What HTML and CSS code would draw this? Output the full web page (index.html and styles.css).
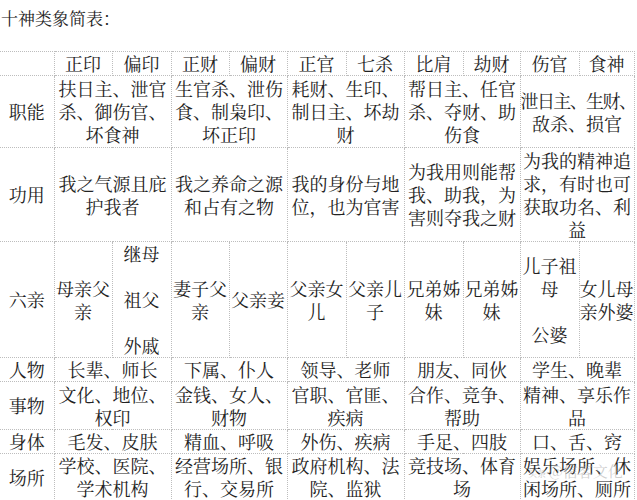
FILE: index.html
```html
<!DOCTYPE html>
<html lang="zh-CN">
<head>
<meta charset="utf-8">
<title>十神类象简表</title>
<link rel="stylesheet" href="styles.css">
</head>
<body>
<div class="page">
  <h1 class="title">十神类象简表：</h1>
  <table class="grid">
    <colgroup>
      <col class="c-label">
      <col class="c58"><col class="c59"><col class="c58"><col class="c58"><col class="c59">
      <col class="c58"><col class="c59"><col class="c57"><col class="c59"><col class="c55">
    </colgroup>
    <tr class="r-head">
      <td class="label"></td>
      <td>正印</td><td>偏印</td><td>正财</td><td>偏财</td><td>正官</td>
      <td>七杀</td><td>比肩</td><td>劫财</td><td>伤官</td><td>食神</td>
    </tr>
    <tr class="r-func">
      <td class="label">职能</td>
      <td colspan="2">扶日主、泄官<br>杀、御伤官、<br>坏食神</td>
      <td colspan="2">生官杀、泄伤<br>食、制枭印、<br>坏正印</td>
      <td colspan="2">耗财、生印、<br>制日主、坏劫<br>财</td>
      <td colspan="2">帮日主、任官<br>杀、夺财、助<br>伤食</td>
      <td colspan="2"><span class="tight">泄日主、生财、</span><br>敌杀、损官</td>
    </tr>
    <tr class="r-use">
      <td class="label">功用</td>
      <td colspan="2">我之气源且庇<br>护我者</td>
      <td colspan="2">我之养命之源<br>和占有之物</td>
      <td colspan="2">我的身份与地<br>位，也为官害</td>
      <td colspan="2">为我用则能帮<br>我、助我，为<br>害则夺我之财</td>
      <td colspan="2">为我的精神追<br>求，有时也可<br>获取功名、利<br>益</td>
    </tr>
    <tr class="r-kin">
      <td class="label">六亲</td>
      <td>母亲父<br>亲</td>
      <td>继母<br><br>祖父<br><br>外戚</td>
      <td>妻子父<br>亲</td>
      <td>父亲妾</td>
      <td>父亲女<br>儿</td>
      <td>父亲儿<br>子</td>
      <td>兄弟姊<br>妹</td>
      <td>兄弟姊<br>妹</td>
      <td>儿子祖<br>母<br><br>公婆</td>
      <td>女儿母<br>亲外婆</td>
    </tr>
    <tr class="r-person">
      <td class="label">人物</td>
      <td colspan="2">长辈、师长</td>
      <td colspan="2">下属、仆人</td>
      <td colspan="2">领导、老师</td>
      <td colspan="2">朋友、同伙</td>
      <td colspan="2">学生、晚辈</td>
    </tr>
    <tr class="r-thing">
      <td class="label">事物</td>
      <td colspan="2">文化、地位、<br>权印</td>
      <td colspan="2">金钱、女人、<br>财物</td>
      <td colspan="2">官职、官匪、<br>疾病</td>
      <td colspan="2">合作、竞争、<br>帮助</td>
      <td colspan="2">精神、享乐作<br>品</td>
    </tr>
    <tr class="r-body">
      <td class="label">身体</td>
      <td colspan="2">毛发、皮肤</td>
      <td colspan="2">精血、呼吸</td>
      <td colspan="2">外伤、疾病</td>
      <td colspan="2">手足、四肢</td>
      <td colspan="2">口、舌、窍</td>
    </tr>
    <tr class="r-place">
      <td class="label">场所</td>
      <td colspan="2">学校、医院、<br>学术机构</td>
      <td colspan="2">经营场所、银<br>行、交易所</td>
      <td colspan="2">政府机构、法<br>院、监狱</td>
      <td colspan="2">竞技场、体育<br>场</td>
      <td colspan="2">娱乐场所、休<br>闲场所、厕所</td>
    </tr>
  </table>
  <div class="watermark"><span class="wm-logo">头条</span>@信客文化</div>
</div>
</body>
</html>
```

FILE: styles.css
```css
html, body {
  margin: 0;
  padding: 0;
  background: #ffffff;
}

.page {
  position: relative;
  width: 637px;
  height: 500px;
  overflow: hidden;
  font-family: "Noto Serif CJK SC", "Noto Sans CJK SC", "Liberation Serif", serif;
  color: #222222;
}

.title {
  margin: 0;
  padding: 8px 0 0 1px;
  height: 43px;
  font-size: 17px;
  line-height: 20px;
  font-weight: normal;
  color: #222222;
}

.grid {
  border-collapse: collapse;
  table-layout: fixed;
  width: 634px;
  font-size: 18px;
  line-height: 23px;
}

.c-label { width: 54px; }
.c55 { width: 55px; }
.c57 { width: 57px; }
.c58 { width: 58px; }
.c59 { width: 59px; }

.grid td {
  border: 1px dotted #bdbdbd;
  padding: 0;
  text-align: center;
  vertical-align: middle;
  white-space: nowrap;
  overflow: visible;
}

.grid td.label {
  border-left: none;
}

.r-head td { height: 22px; }
.r-func td { height: 71px; }
.r-use td { height: 93px; }
.r-kin td { height: 114px; }
.r-person td { height: 22px; }
.r-thing td { height: 47px; }
.r-body td { height: 23px; }
.r-place td { height: 45px; }

.tight {
  letter-spacing: -1.6px;
}

.watermark {
  position: absolute;
  left: 528px;
  top: 462px;
  font-size: 15px;
  line-height: 18px;
  color: rgba(160, 160, 160, 0.5);
  white-space: nowrap;
}

.wm-logo {
  display: inline-block;
  font-size: 9px;
  margin-right: 3px;
}
```
